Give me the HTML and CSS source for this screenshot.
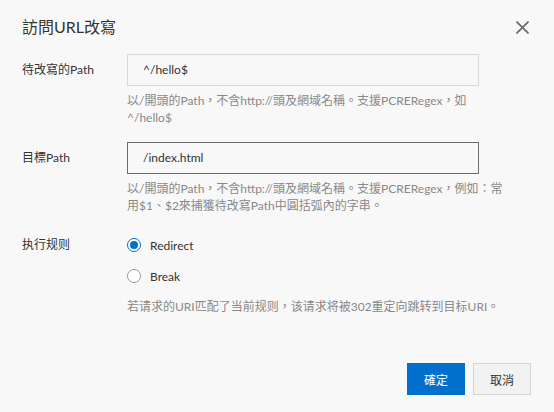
FILE: index.html
```html
<!DOCTYPE html>
<html lang="zh-Hant">
<head>
<meta charset="utf-8">
<title>訪問URL改寫</title>
<link rel="stylesheet" href="styles.css">
</head>
<body>
<div class="dialog">
  <div class="header">
    <h1 class="title">訪問URL改寫</h1>
    <span class="close" aria-label="close">
      <svg width="13" height="13" viewBox="0 0 13 13"><path d="M0.5 0.5 L12.5 12.5 M12.5 0.5 L0.5 12.5" stroke="#666" stroke-width="1.6" fill="none"/></svg>
    </span>
  </div>

  <div class="form">
    <div class="row">
      <label class="label">待改寫的Path</label>
      <div class="field">
        <div class="input">^/hello$</div>
        <p class="help">以/開頭的Path，不含http://頭及網域名稱。支援PCRERegex，如<br>^/hello$</p>
      </div>
    </div>

    <div class="row row-2">
      <label class="label">目標Path</label>
      <div class="field">
        <div class="input input-active">/index.html</div>
        <p class="help">以/開頭的Path，不含http://頭及網域名稱。支援PCRERegex，例如：常<br>用$1、$2來捕獲待改寫Path中圓括弧內的字串。</p>
      </div>
    </div>

    <div class="row row-3">
      <label class="label label-radio">执行规则</label>
      <div class="field">
        <div class="radio-item"><span class="radio checked"></span><span class="radio-text">Redirect</span></div>
        <div class="radio-item"><span class="radio"></span><span class="radio-text">Break</span></div>
        <p class="help help-radio">若请求的URI匹配了当前规则，该请求将被302重定向跳转到目标URI。</p>
      </div>
    </div>
  </div>

  <div class="footer">
    <button class="btn btn-primary">確定</button>
    <button class="btn btn-default">取消</button>
  </div>
</div>
</body>
</html>
```

FILE: styles.css
```css
html, body {
  margin: 0;
  padding: 0;
  background: #f8f8f8;
}
body {
  font-family: "Segoe UI", Lato, "Noto Sans CJK TC", "Noto Sans CJK SC", sans-serif;
  color: #333;
  font-size: 12px;
  width: 554px;
  height: 412px;
  overflow: hidden;
  text-spacing-trim: space-all;
}
.dialog {
  padding: 0 23px 0 22px;
}
.header {
  display: flex;
  justify-content: space-between;
  align-items: center;
  height: 54px;
}
.title {
  margin: 0;
  font-size: 16px;
  font-weight: normal;
  color: #333;
  line-height: 22px;
}
.close {
  display: flex;
  width: 13px;
  height: 13px;
  margin-right: 2px;
}
.row {
  display: grid;
  grid-template-columns: 105px 1fr;
}
.label {
  line-height: 32px;
  color: #333;
}
.input {
  box-sizing: border-box;
  width: 352px;
  height: 32px;
  border: 1px solid #d9d9d9;
  padding-left: 15px;
  line-height: 30px;
  color: #333;
}
.input-active {
  border-color: #6b6b6b;
}
.help {
  margin: 6px 0 0;
  color: #888;
  line-height: 17px;
  white-space: nowrap;
}
.row-2 {
  margin-top: 16px;
}
.row-3 {
  margin-top: 21px;
}
.label-radio {
  line-height: 20px;
}
.radio-item {
  display: flex;
  align-items: center;
  height: 20px;
  margin-bottom: 11px;
}
.radio-item + .radio-item {
  margin-bottom: 0;
}
.radio {
  box-sizing: border-box;
  width: 14px;
  height: 14px;
  border: 1px solid #999;
  border-radius: 50%;
  background: #fff;
  margin-right: 9px;
  display: flex;
  align-items: center;
  justify-content: center;
}
.radio.checked {
  border: 1.5px solid #0070cc;
}
.radio.checked::after {
  content: "";
  width: 8px;
  height: 8px;
  border-radius: 50%;
  background: #0070cc;
}
.radio-text {
  color: #333;
}
.help-radio {
  margin-top: 12px;
}
.footer {
  display: flex;
  justify-content: flex-end;
  gap: 8px;
  margin-top: 48px;
}
.btn {
  box-sizing: border-box;
  width: 58px;
  height: 32px;
  font-family: inherit;
  font-size: 12px;
  padding: 0;
  cursor: pointer;
}
.btn-primary {
  background: #0070cc;
  color: #fff;
  border: 1px solid #0070cc;
}
.btn-default {
  background: #f2f2f2;
  color: #333;
  border: 1px solid #d4d4d4;
}
```
